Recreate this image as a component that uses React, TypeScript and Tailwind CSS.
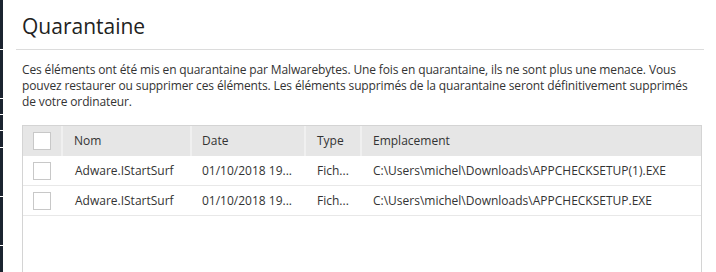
const rows = [
  { name: 'Adware.IStartSurf', date: '01/10/2018 19...', type: 'Fich...', path: 'C:\\Users\\michel\\Downloads\\APPCHECKSETUP(1).EXE' },
  { name: 'Adware.IStartSurf', date: '01/10/2018 19...', type: 'Fich...', path: 'C:\\Users\\michel\\Downloads\\APPCHECKSETUP.EXE' },
];

const sideSegments = ['h-[49px]', 'h-[48px]', 'h-[15px]', 'h-[15px]', 'h-[16px]', 'h-[48px]', 'h-[48px]', 'h-[40px]'];

function Box() {
  return <span className="block w-[18px] h-[18px] border border-[#c8c8c8] bg-white" />;
}

export default function App() {
  return (
    <div className="flex h-[272px] w-[716px] overflow-hidden bg-white text-[#333] font-['Open_Sans',sans-serif]">
      <div className="flex w-[3px] shrink-0 flex-col gap-px">
        {sideSegments.map((h, i) => (
          <div key={i} className={`${h} shrink-0 bg-[#1b2430]`} />
        ))}
      </div>

      <div className="flex flex-1 flex-col pl-[13px] pr-[12px]">
        <h1 className="h-[49px] shrink-0 pl-[6px] pt-[12px] text-[21px] leading-[28px] text-[#222]">Quarantaine</h1>
        <div className="h-px shrink-0 bg-[#dcdcdc]" />

        <p className="shrink-0 pl-[6px] pr-[2px] pt-[12px] text-[12px] leading-[16px] tracking-[-0.13px] text-[#333]">
          Ces éléments ont été mis en quarantaine par Malwarebytes. Une fois en quarantaine, ils ne sont plus une menace. Vous
          pouvez restaurer ou supprimer ces éléments. Les éléments supprimés de la quarantaine seront définitivement supprimés
          de votre ordinateur.
        </p>

        <div className="ml-[6px] mr-[2px] mt-[15px] min-h-[200px] shrink-0 border border-[#d4d4d4] text-[12px]">
          <div className="flex h-[30px] items-center bg-[#e6e6e6]">
            <div className="flex h-full w-[40px] items-center justify-center border-r-2 border-[#f0f0f0]">
              <Box />
            </div>
            <div className="flex h-full w-[129px] items-center border-r-2 border-[#f0f0f0] pl-[11px]">Nom</div>
            <div className="flex h-full w-[114px] items-center border-r-2 border-[#f0f0f0] pl-[10px]">Date</div>
            <div className="flex h-full w-[56px] items-center border-r-2 border-[#f0f0f0] pl-[11px]">Type</div>
            <div className="flex h-full flex-1 items-center pl-[11px]">Emplacement</div>
          </div>
          {rows.map((r, i) => (
            <div key={i} className="flex h-[30px] items-center border-b border-[#e8e8e8]">
              <div className="flex w-[40px] justify-center pr-[2px]">
                <Box />
              </div>
              <div className="w-[129px] truncate pl-[12px]">{r.name}</div>
              <div className="w-[114px] truncate pl-[10px]">{r.date}</div>
              <div className="w-[56px] truncate pl-[11px]">{r.type}</div>
              <div className="flex-1 truncate pl-[11px]">{r.path}</div>
            </div>
          ))}
        </div>
      </div>
    </div>
  );
}
